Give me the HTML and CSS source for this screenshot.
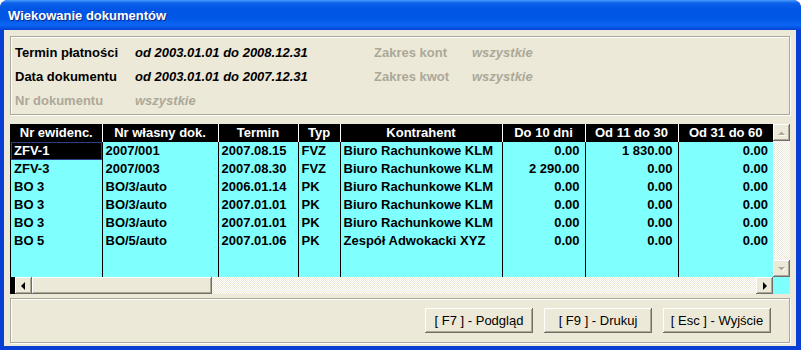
FILE: index.html
```html
<!DOCTYPE html>
<html lang="pl">
<head>
    <meta charset="UTF-8">
    <title>Wiekowanie dokumentów</title>
    <link rel="stylesheet" href="styles.css">
</head>
<body>

    <div class="window">
        <div class="titlebar">Wiekowanie dokumentów</div>

        <div class="client">
            <div class="group filters">
                <span class="label">Termin płatności</span>
                <span class="value">od 2003.01.01 do 2008.12.31</span>
                <span class="label off">Zakres kont</span>
                <span class="value off">wszystkie</span>

                <span class="label">Data dokumentu</span>
                <span class="value">od 2003.01.01 do 2007.12.31</span>
                <span class="label off">Zakres kwot</span>
                <span class="value off">wszystkie</span>

                <span class="label off">Nr dokumentu</span>
                <span class="value off">wszystkie</span>
            </div>

            <div class="grid">
                <div class="data">
                    <table>
                        <colgroup>
                            <col style="width:91px"><col style="width:116px"><col style="width:80px"><col style="width:42px">
                            <col style="width:162px"><col style="width:83px"><col style="width:93px"><col style="width:95px">
                        </colgroup>
                        <tr>
                            <th>Nr ewidenc.</th><th>Nr własny dok.</th><th>Termin</th><th>Typ</th>
                            <th>Kontrahent</th><th>Do 10 dni</th><th>Od 11 do 30</th><th>Od 31 do 60</th>
                        </tr>
                        <tr class="current">
                            <td class="sel">ZFV-1</td><td>2007/001</td><td>2007.08.15</td><td>FVZ</td>
                            <td>Biuro Rachunkowe KLM</td><td class="num">0.00</td><td class="num">1&nbsp;830.00</td><td class="num">0.00</td>
                        </tr>
                        <tr>
                            <td>ZFV-3</td><td>2007/003</td><td>2007.08.30</td><td>FVZ</td>
                            <td>Biuro Rachunkowe KLM</td><td class="num">2&nbsp;290.00</td><td class="num">0.00</td><td class="num">0.00</td>
                        </tr>
                        <tr>
                            <td>BO 3</td><td>BO/3/auto</td><td>2006.01.14</td><td>PK</td>
                            <td>Biuro Rachunkowe KLM</td><td class="num">0.00</td><td class="num">0.00</td><td class="num">0.00</td>
                        </tr>
                        <tr>
                            <td>BO 3</td><td>BO/3/auto</td><td>2007.01.01</td><td>PK</td>
                            <td>Biuro Rachunkowe KLM</td><td class="num">0.00</td><td class="num">0.00</td><td class="num">0.00</td>
                        </tr>
                        <tr>
                            <td>BO 3</td><td>BO/3/auto</td><td>2007.01.01</td><td>PK</td>
                            <td>Biuro Rachunkowe KLM</td><td class="num">0.00</td><td class="num">0.00</td><td class="num">0.00</td>
                        </tr>
                        <tr>
                            <td>BO 5</td><td>BO/5/auto</td><td>2007.01.06</td><td>PK</td>
                            <td>Zespół Adwokacki XYZ</td><td class="num">0.00</td><td class="num">0.00</td><td class="num">0.00</td>
                        </tr>
                        <tr class="fill">
                            <td></td><td></td><td></td><td></td><td></td><td></td><td></td><td></td>
                        </tr>
                    </table>
                </div>

                <div class="vscroll">
                    <div class="sbtn">
                        <svg width="9" height="6" viewBox="0 0 9 6"><path d="M1 5h7L4.5 1.5z" fill="#fff" transform="translate(1 1)"/><path d="M1 5h7L4.5 1.5z" fill="#aca899"/></svg>
                    </div>
                    <div class="track"></div>
                    <div class="sbtn">
                        <svg width="9" height="6" viewBox="0 0 9 6"><path d="M1 1h7L4.5 4.5z" fill="#fff" transform="translate(1 1)"/><path d="M1 1h7L4.5 4.5z" fill="#aca899"/></svg>
                    </div>
                </div>

                <div class="hscroll">
                    <div class="edge"></div>
                    <div class="sbtn">
                        <svg width="5" height="8" viewBox="0 0 5 8"><path d="M4 0v8L0 4z" fill="#000"/></svg>
                    </div>
                    <div class="thumb"></div>
                    <div class="track"></div>
                    <div class="sbtn">
                        <svg width="5" height="8" viewBox="0 0 5 8"><path d="M1 0v8l4-4z" fill="#000"/></svg>
                    </div>
                </div>

                <div class="corner"></div>
            </div>

            <div class="group actions">
                <button>[ F7 ] - Podgląd</button>
                <button>[ F9 ] - Drukuj</button>
                <button>[ Esc ] - Wyjście</button>
            </div>
        </div>
    </div>

</body>
</html>
```

FILE: styles.css
```css
*{
    margin: 0;
    padding: 0;
    box-sizing: border-box;
}

body {
    background-color: #fff;
    font-family: "Liberation Sans", Arial, sans-serif;
    font-size: 13px;
    color: #000;
}

.window {
    width: 801px;
    height: 350px;
    background-color: #0a3fd6;
    border-radius: 8px 8px 0 0;
    display: flex;
    flex-direction: column;
    overflow: hidden;
}

.titlebar {
    height: 30px;
    flex: none;
    padding: 3px 0 0 8px;
    line-height: 26px;
    color: #fff;
    font-weight: bold;
    font-size: 13px;
    text-shadow: 1px 1px #0b2a8a;
    background: linear-gradient(#4a9cff 0, #0c62ea 3px, #0055e5 9px, #0157e6 19px, #0b66f3 25px, #0552e2 28px, #0a3fd6 30px);
}

.client {
    flex: 1;
    margin: 0 5px 4px 4px;
    background-color: #ece9d8;
    padding: 6px 6px 0 6px;
    display: flex;
    flex-direction: column;
}

/* ramki grupujace */
.group {
    border: 1px solid #aca899;
    box-shadow: inset 1px 1px #fff, 1px 1px #fff;
}

.filters {
    height: 79px;
    flex: none;
    display: grid;
    grid-template-columns: 120px 239px 98px 1fr;
    grid-auto-rows: 24px;
    align-items: center;
    padding: 3px 0 0 4px;
    white-space: nowrap;
}

.label {
    font-weight: bold;
}
.value {
    font-weight: bold;
    font-style: italic;
}
.off {
    color: #aca899;
}

/* tabela */
.grid {
    margin-top: 9px;
    height: 170px;
    flex: none;
    display: grid;
    grid-template-columns: 1fr 17px;
    grid-template-rows: 1fr 17px;
    border-left: 1px solid #000;
}

.data {
    background-color: #80ffff;
    overflow: hidden;
}

table {
    width: 762px;
    height: 153px;
    table-layout: fixed;
    border-collapse: collapse;
}

th {
    height: 18px;
    background-color: #000;
    color: #fff;
    font-weight: bold;
    text-align: center;
    line-height: 16px;
    border-right: 1px solid #fff;
    white-space: nowrap;
    overflow: hidden;
}

td {
    height: 18px;
    padding: 0 3px;
    font-weight: bold;
    line-height: 16px;
    border-right: 1px solid #000;
    white-space: nowrap;
    overflow: hidden;
}
td.num {
    text-align: right;
    padding-right: 5px;
}
th:last-child, td:last-child {
    border-right: none;
}

.current td.sel {
    background-color: #000;
    color: #fff;
    box-shadow: inset 0 0 0 1px #2a3f86;
}

.fill td {
    height: auto;
}

/* paski przewijania */
.vscroll {
    grid-column: 2;
    grid-row: 1;
    display: flex;
    flex-direction: column;
}

.hscroll {
    grid-column: 1;
    grid-row: 2;
    display: flex;
}

.track {
    flex: 1;
    background: repeating-conic-gradient(#fff 0 25%, #ece9d8 0 50%) 0 0 / 2px 2px;
}

.sbtn {
    width: 17px;
    height: 17px;
    flex: none;
    background-color: #ece9d8;
    box-shadow: inset -1px -1px #716f64, inset 1px 1px #fff, inset -2px -2px #aca899;
    display: flex;
    align-items: center;
    justify-content: center;
}

.edge {
    width: 4px;
    background-color: #000;
}

.thumb {
    width: 180px;
    background-color: #ece9d8;
    box-shadow: inset -1px -1px #716f64, inset 1px 1px #fff, inset -2px -2px #aca899;
}

.corner {
    background-color: #80ffff;
}

/* przyciski */
.actions {
    margin-top: 4px;
    height: 45px;
    flex: none;
    display: flex;
    justify-content: flex-end;
    align-items: center;
    gap: 11px;
    padding-right: 18px;
}

button {
    width: 108px;
    height: 25px;
    font-family: "Liberation Sans", Arial, sans-serif;
    font-size: 13px;
    color: #000;
    background-color: #ece9d8;
    border: none;
    box-shadow: inset -1px -1px #716f64, inset 1px 1px #fff, inset -2px -2px #aca899;
}
```
